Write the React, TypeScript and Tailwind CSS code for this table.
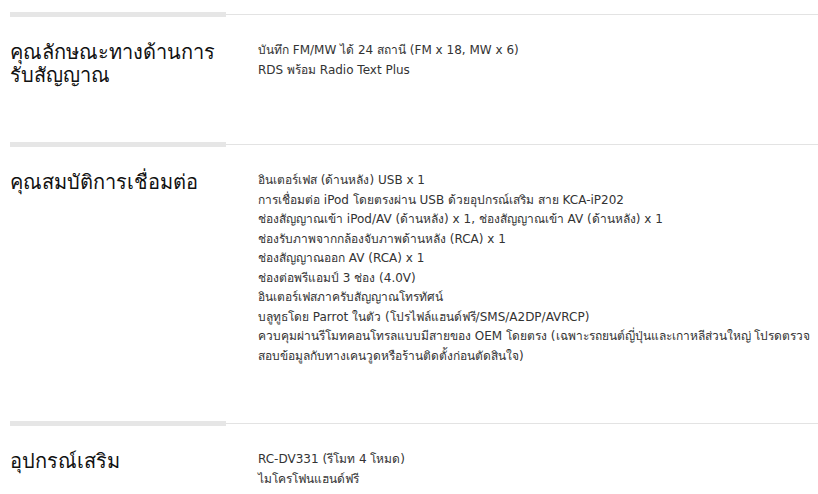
const sections = [
  {
    title: 'คุณลักษณะทางด้านการรับสัญญาณ',
    items: ['บันทึก FM/MW ได้ 24 สถานี (FM x 18, MW x 6)', 'RDS พร้อม Radio Text Plus'],
  },
  {
    title: 'คุณสมบัติการเชื่อมต่อ',
    items: [
      'อินเตอร์เฟส (ด้านหลัง) USB x 1',
      'การเชื่อมต่อ iPod โดยตรงผ่าน USB ด้วยอุปกรณ์เสริม สาย KCA-iP202',
      'ช่องสัญญาณเข้า iPod/AV (ด้านหลัง) x 1, ช่องสัญญาณเข้า AV (ด้านหลัง) x 1',
      'ช่องรับภาพจากกล้องจับภาพด้านหลัง (RCA) x 1',
      'ช่องสัญญาณออก AV (RCA) x 1',
      'ช่องต่อพรีแอมป์ 3 ช่อง (4.0V)',
      'อินเตอร์เฟสภาครับสัญญาณโทรทัศน์',
      'บลูทูธโดย Parrot ในตัว (โปรไฟล์แฮนด์ฟรี/SMS/A2DP/AVRCP)',
      'ควบคุมผ่านรีโมทคอนโทรลแบบมีสายของ OEM โดยตรง (เฉพาะรถยนต์ญี่ปุ่นและเกาหลีส่วนใหญ่ โปรดตรวจสอบข้อมูลกับทางเคนวูดหรือร้านติดตั้งก่อนตัดสินใจ)',
    ],
  },
  {
    title: 'อุปกรณ์เสริม',
    items: ['RC-DV331 (รีโมท 4 โหมด)', 'ไมโครโฟนแฮนด์ฟรี'],
  },
]

export default function App() {
  return (
    <div className="w-[818px] bg-white pt-3 font-['DejaVu_Sans',sans-serif]">
      {sections.map((section) => (
        <section key={section.title} className="pb-[55px]">
          {/* divider */}
          <div className="flex items-center pl-[10px]">
            <div className="h-[5px] w-[216px] bg-[#e6e6e6]" />
            <div className="h-px flex-1 bg-[#e3e3e3]" />
          </div>

          <div className="flex items-start pt-[24px]">
            <h3 className="w-[258px] shrink-0 pl-[10px] pr-[20px] text-[20px] leading-[23px] font-normal text-[#111]">
              {section.title}
            </h3>
            <ul className="flex-1 text-[12px] leading-[19.5px] text-[#333]">
              {section.items.map((item) => (
                <li key={item}>{item}</li>
              ))}
            </ul>
          </div>
        </section>
      ))}
    </div>
  )
}
